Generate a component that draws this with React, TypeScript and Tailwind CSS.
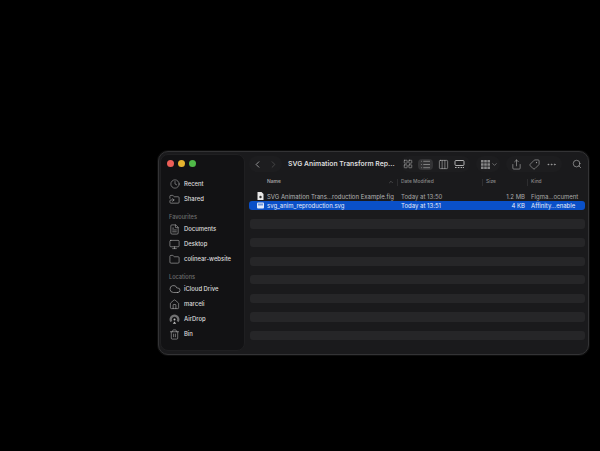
import React from "react";
import { ChevronLeft, ChevronRight, ChevronDown, ChevronUp, LayoutGrid, List, Columns3, Share, Tag, Ellipsis, Search, Clock, FileText, Monitor, Folder, Cloud, House, Trash2, FolderSymlink } from "lucide-react";

const ic = { strokeWidth: 1.2 };

function SideRow({ icon, label }: { icon: React.ReactNode; label: string }) {
  return (
    <div className="flex h-[15px] items-center pl-[7px] text-[5.9px] font-medium text-[#dedede]">
      <span className="flex w-[13px] justify-center text-[#c0c0c0]">{icon}</span>
      <span className="ml-[3px]">{label}</span>
    </div>
  );
}

function SideHead({ label }: { label: string }) {
  return <div className="flex h-[8.5px] items-center pl-[8px] text-[5.6px] font-medium text-[#6e6e6e]">{label}</div>;
}

function AirDrop() {
  return (
    <svg width="11" height="11" viewBox="0 0 11 11" fill="none" stroke="currentColor">
      <path d="M5.5.5a5 5 0 0 1 4.3 7.5L7.6 7a2.6 2.6 0 1 0-4.2 0L1.2 8A5 5 0 0 1 5.5.5z" fill="currentColor" fillOpacity="0.55" stroke="none" />
      <circle cx="5.5" cy="5.6" r="1" fill="currentColor" stroke="none" />
      <path d="M3.8 9.8h3.4L5.5 7.4z" fill="currentColor" stroke="none" />
    </svg>
  );
}

function Gallery() {
  return (
    <svg width="11" height="10" viewBox="0 0 11 10" fill="none" stroke="currentColor" strokeWidth="0.9">
      <rect x="1" y="1.5" width="9" height="5" rx="1" />
      <path d="M1 8.5h1.6M3.8 8.5h1.6M6.6 8.5h1.6M9 8.5h1" />
    </svg>
  );
}

function GroupIcon() {
  return (
    <svg width="9" height="9" viewBox="0 0 9 9" fill="currentColor" fillOpacity="0.65">
      {[0, 3.2, 6.4].map((y) =>
        [0, 3.2, 6.4].map((x) => <rect key={`${x}-${y}`} x={x} y={y} width="2.6" height="2.6" rx="0.3" />),
      )}
    </svg>
  );
}

function Stripe() {
  return <div className="ml-[1px] mr-[3.5px] h-[9.3px] rounded-[3px] bg-[#262628]" />;
}

function Gap() {
  return <div className="h-[9.3px]" />;
}

function Columns({ name, date, size, kind, selected }: { name: React.ReactNode; date: string; size: string; kind: string; selected?: boolean }) {
  return (
    <div className={`mr-[3.5px] flex h-[9.3px] items-center rounded-[3px] text-[6px] ${selected ? "bg-[#0a50c8] text-[#e8eefb]" : "text-[#a9a9a9]"}`}>
      <div className="flex w-[152px] items-center pl-[8px]">{name}</div>
      <div className="w-[76px]">{date}</div>
      <div className="w-[48px] text-right">{size}</div>
      <div className="pl-[6px]">{kind}</div>
    </div>
  );
}

export default function App() {
  return (
    <div className="h-[451px] w-[600px] overflow-hidden bg-black pl-[158px] pt-[151px] [font-family:Inter,'Liberation_Sans',sans-serif]">
      <div className="flex h-[204px] w-[431px] rounded-[10px] border border-[#333335] bg-[#1a1a1c] shadow-[0_0_0_1px_#0d0d0d]">
        <div className="ml-[1px] mt-[2px] h-[197px] w-[85px] shrink-0 rounded-[8px] border border-[#1f1f21] bg-[#121214] pt-[1px]">
          <div className="flex h-[14px] items-center gap-[4px] pl-[5.5px]">
            <span className="h-[7px] w-[7px] rounded-full bg-[#ec5f58]" />
            <span className="h-[7px] w-[7px] rounded-full bg-[#e5b32f]" />
            <span className="h-[7px] w-[7px] rounded-full bg-[#50b948]" />
          </div>
          <div className="mt-[6.5px]">
            <SideRow icon={<Clock size={10} {...ic} />} label="Recent" />
            <SideRow icon={<FolderSymlink size={11} {...ic} />} label="Shared" />
          </div>
          <div className="mt-[6.5px]">
            <SideHead label="Favourites" />
            <SideRow icon={<FileText size={11} {...ic} />} label="Documents" />
            <SideRow icon={<Monitor size={11} {...ic} />} label="Desktop" />
            <SideRow icon={<Folder size={11} {...ic} />} label="colinear-website" />
          </div>
          <div className="mt-[6.5px]">
            <SideHead label="Locations" />
            <SideRow icon={<Cloud size={12} {...ic} />} label="iCloud Drive" />
            <SideRow icon={<House size={11} {...ic} />} label="marceli" />
            <SideRow icon={<AirDrop />} label="AirDrop" />
            <SideRow icon={<Trash2 size={11} {...ic} />} label="Bin" />
          </div>
        </div>

        <div className="min-w-0 flex-1 pl-[4px]">
          <div className="flex h-[24px] items-center text-[#c0c0c0]">
            <div className="flex h-[16px] w-[33px] shrink-0 items-center rounded-full bg-[#1d1d1f] pl-[2.5px]">
              <ChevronLeft size={11} strokeWidth={1.4} className="text-[#d8d8d8]" />
              <ChevronRight size={11} strokeWidth={1.4} className="ml-[5px] text-[#5b5b5b]" />
            </div>
            <div className="ml-[6px] w-[108px] shrink-0 whitespace-nowrap text-[6.85px] font-semibold text-[#dcdcdc]">SVG Animation Transform Rep...</div>
            <div className="ml-[5px] flex h-[16px] w-[69px] shrink-0 items-center rounded-full bg-[#1d1d1f]">
              <div className="flex w-[14px] shrink-0 justify-center"><LayoutGrid size={10} {...ic} /></div>
              <div className="ml-[2.5px] flex h-[11px] w-[15px] shrink-0 items-center justify-center rounded-[4px] bg-[#333335]"><List size={11} {...ic} /></div>
              <div className="ml-[3px] flex w-[15px] shrink-0 justify-center"><Columns3 size={11} {...ic} /></div>
              <div className="ml-[1px] flex w-[15px] shrink-0 justify-center"><Gallery /></div>
            </div>
            <div className="ml-[6px] flex h-[16px] w-[24px] shrink-0 items-center rounded-full bg-[#1d1d1f] pl-[5px]">
              <GroupIcon />
              <ChevronDown size={7} strokeWidth={1.6} className="ml-[1px]" />
            </div>
            <div className="ml-[6px] flex h-[16px] w-[56px] shrink-0 items-center rounded-full bg-[#1d1d1f] pl-[3px]">
              <div className="flex w-[14px] shrink-0 justify-center"><Share size={11} {...ic} /></div>
              <div className="ml-[4px] flex w-[14px] shrink-0 justify-center"><Tag size={11} {...ic} className="rotate-90" /></div>
              <div className="ml-[3px] flex w-[14px] shrink-0 justify-center"><Ellipsis size={11} {...ic} /></div>
            </div>
            <div className="ml-[7px] flex w-[15px] shrink-0 justify-center"><Search size={10} strokeWidth={1.4} /></div>
          </div>

          <div className="mt-[1px] flex h-[10px] items-center text-[4.9px] font-medium text-[#8a8a8a]">
            <div className="flex w-[148px] items-center justify-between pl-[18px] pr-[3px] font-semibold text-[#a0a0a0]">
              <span>Name</span>
              <ChevronUp size={6} strokeWidth={1.4} />
            </div>
            <div className="h-[7px] w-px bg-[#2d2d2f]" />
            <div className="w-[84px] pl-[3px]">Date Modified</div>
            <div className="h-[7px] w-px bg-[#2d2d2f]" />
            <div className="w-[44px] pl-[3px]">Size</div>
            <div className="h-[7px] w-px bg-[#2d2d2f]" />
            <div className="pl-[3px]">Kind</div>
          </div>

          <div className="mt-[4.5px]">
            <Columns
              name={
                <>
                  <svg width="7" height="8" viewBox="0 0 7 8" className="mr-[3px]"><path d="M1 0h3.5L6.5 2v6H.5V.5z" fill="#e8e8e8" /><circle cx="3.5" cy="5" r="1.2" fill="#333" /></svg>
                  <span className="whitespace-nowrap text-[#b5b5b5]">SVG Animation Trans...roduction Example.fig</span>
                </>
              }
              date="Today at 13:50"
              size="1.2 MB"
              kind="Figma...ocument"
            />
            <Columns
              selected
              name={
                <>
                  <svg width="7" height="7" viewBox="0 0 7 7" className="mr-[3px]"><rect width="7" height="6" y="0.5" rx="1" fill="#dfe8f8" /><rect x="1" y="1.5" width="5" height="2" fill="#6f96dc" /></svg>
                  <span className="whitespace-nowrap">svg_anim_reproduction.svg</span>
                </>
              }
              date="Today at 13:51"
              size="4 KB"
              kind="Affinity...enable"
            />
            <Gap />
            <Stripe /><Gap /><Stripe /><Gap /><Stripe /><Gap /><Stripe /><Gap /><Stripe /><Gap /><Stripe /><Gap /><Stripe />
          </div>
        </div>
      </div>
    </div>
  );
}
